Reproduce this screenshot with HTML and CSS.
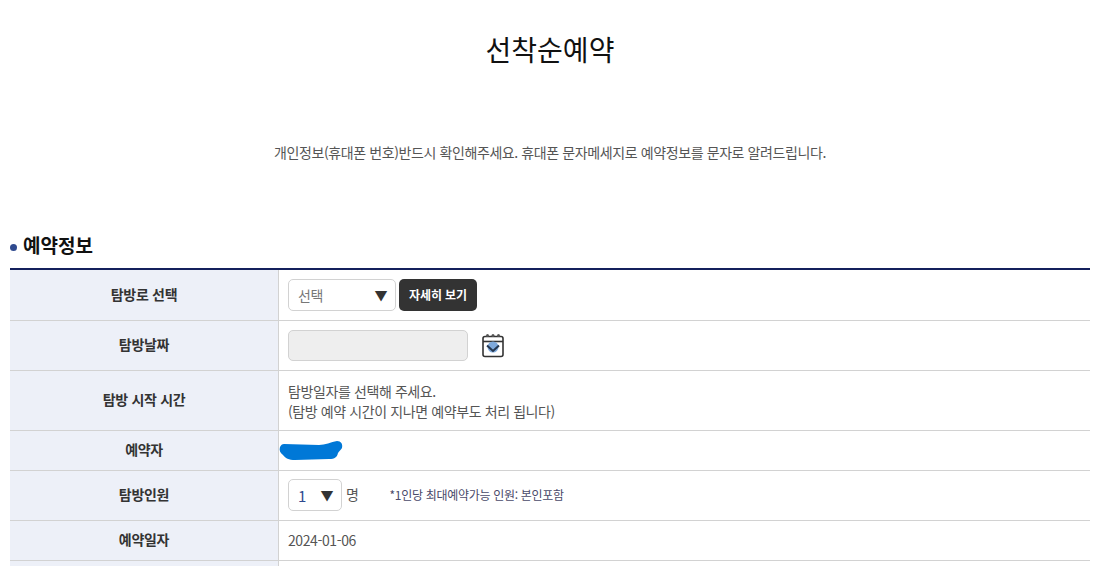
FILE: index.html
```html
<!DOCTYPE html>
<html lang="ko">

<head>
    <meta charset="UTF-8">
    <meta name="viewport" content="width=device-width, initial-scale=1.0">
    <title>선착순예약</title>
    <link rel="stylesheet" href="styles.css">
</head>

<body class="body">
    <div class="wrap">
        <h1 class="page-title">선착순예약</h1>
        <p class="notice">개인정보(휴대폰 번호)반드시 확인해주세요. 휴대폰 문자메세지로 예약정보를 문자로 알려드립니다.</p>

        <h2 class="section-title"><span class="dot"></span>예약정보</h2>

        <table class="form-table">
            <tr class="row-first">
                <th>탐방로 선택</th>
                <td>
                    <div class="field-line">
                        <div class="select-box course-select">
                            <select class="select">
                                <option>선택</option>
                            </select>
                        </div>
                        <button class="btn-detail" type="button">자세히 보기</button>
                    </div>
                </td>
            </tr>
            <tr class="row-50">
                <th>탐방날짜</th>
                <td>
                    <div class="field-line date-line">
                        <input class="date-input" type="text" disabled>
                        <svg class="cal-icon" width="24" height="26" viewBox="0 0 24 26">
                            <rect x="2" y="4.5" width="20" height="20" rx="2" fill="#fff" stroke="#333" stroke-width="1.6" />
                            <path d="M2 9.5H22" stroke="#333" stroke-width="1.6" />
                            <circle cx="6.5" cy="3.5" r="1.5" fill="#555" />
                            <circle cx="12" cy="3.5" r="1.5" fill="#555" />
                            <circle cx="17.5" cy="3.5" r="1.5" fill="#555" />
                            <circle cx="12" cy="15" r="5.5" fill="#7ea9dc" />
                            <path d="M6 13.5L12 19L18 13.5" fill="none" stroke="#24364f" stroke-width="2" />
                        </svg>
                    </div>
                </td>
            </tr>
            <tr class="row-60">
                <th>탐방 시작 시간</th>
                <td class="multi">탐방일자를 선택해 주세요.<br>(탐방 예약 시간이 지나면 예약부도 처리 됩니다)</td>
            </tr>
            <tr class="row-40">
                <th>예약자</th>
                <td class="name-cell">
                    <svg class="blot" width="64" height="20" viewBox="0 0 64 20">
                        <path d="M5 3L40 4C46 4 52 1 58 0C62 0 64 3 63 7C62 9 60 10 59 12C58 16 56 18 50 18L16 19C10 19 6 17 4 14C1 12 0 9 1 6C2 4 3 3 5 3Z" fill="#0078d7" />
                    </svg>
                </td>
            </tr>
            <tr class="row-50">
                <th>탐방인원</th>
                <td>
                    <div class="field-line">
                        <div class="select-box count-select">
                            <select class="select count">
                                <option>1</option>
                            </select>
                        </div>
                        <span class="unit">명</span>
                        <span class="hint">*1인당 최대예약가능 인원: 본인포함</span>
                    </div>
                </td>
            </tr>
            <tr class="row-40">
                <th>예약일자</th>
                <td>2024-01-06</td>
            </tr>
            <tr class="row-end">
                <th></th>
                <td></td>
            </tr>
        </table>
    </div>
</body>

</html>
```

FILE: styles.css
```css
html,
body {
    margin: 0;
    height: 566px;
    overflow: hidden;
    background: #fff;
}

body {
    font-family: "Noto Sans CJK KR", "Noto Sans", sans-serif;
    font-size: 14px;
    color: #444;
}

.wrap {
    width: 1080px;
    margin-left: 10px;
}

.page-title {
    margin: 0;
    padding-top: 28px;
    font-size: 28px;
    line-height: 42px;
    font-weight: 400;
    color: #111;
    text-align: center;
}

.notice {
    margin: 0;
    padding-top: 72px;
    font-size: 14px;
    line-height: 20px;
    letter-spacing: -0.4px;
    color: #555;
    text-align: center;
}

.section-title {
    display: flex;
    align-items: center;
    margin: 0;
    padding-top: 67px;
    height: 32px;
    font-size: 19px;
    line-height: 32px;
    font-weight: 700;
    color: #111;
}

.dot {
    width: 7px;
    height: 7px;
    margin-right: 6px;
    margin-top: 5px;
    border-radius: 50%;
    background: #2f4a8f;
}

.form-table {
    width: 1080px;
    margin-top: 7px;
    border-collapse: collapse;
    table-layout: fixed;
    border-top: 2px solid #14205c;
}

.form-table th,
.form-table td {
    padding: 0;
    border-bottom: 1px solid #d2d2d2;
    font-size: 14px;
}

.form-table th {
    width: 268px;
    padding-bottom: 2px;
    background: #edf0f8;
    border-right: 1px solid #d2d2d2;
    font-weight: 700;
    letter-spacing: -0.3px;
    color: #333;
    text-align: center;
}

.form-table td {
    padding-left: 9px;
    letter-spacing: -0.4px;
    color: #555;
}

.row-first {
    height: 51px;
}

.row-40 {
    height: 40px;
}

.row-50 {
    height: 50px;
}

.row-60 {
    height: 60px;
}

.row-end {
    height: 6px;
}

.form-table .row-end th,
.form-table .row-end td {
    padding-bottom: 0;
    border-bottom: 0;
}

.form-table .multi {
    padding-top: 2px;
    line-height: 20px;
}

.field-line {
    display: flex;
    align-items: center;
}

.select-box {
    position: relative;
    height: 32px;
}

.select-box::after {
    content: "▼";
    position: absolute;
    right: 9px;
    top: 7px;
    font-size: 13px;
    line-height: 18px;
    color: #333;
    pointer-events: none;
}

.course-select {
    width: 108px;
}

.count-select {
    width: 54px;
}

.select {
    appearance: none;
    width: 100%;
    height: 32px;
    padding: 0 0 0 9px;
    border: 1px solid #d2d2d2;
    border-radius: 5px;
    background: #fff;
    font-family: inherit;
    font-size: 14px;
    letter-spacing: -0.4px;
    color: #777;
}

.select.count {
    color: #2f4a8f;
    font-size: 15px;
}

.btn-detail {
    width: 78px;
    height: 32px;
    margin-left: 3px;
    padding: 0;
    border: 0;
    border-radius: 5px;
    background: #333;
    font-family: inherit;
    font-size: 12px;
    font-weight: 700;
    letter-spacing: -0.1px;
    color: #fff;
}

.date-input {
    width: 180px;
    height: 31px;
    box-sizing: border-box;
    border: 1px solid #d2d2d2;
    border-radius: 5px;
    background: #eee;
}

.cal-icon {
    margin-left: 13px;
}

.blot {
    display: block;
    margin-left: -9px;
    margin-top: 1px;
}

.unit {
    margin-left: 4px;
    margin-bottom: 2px;
}

.hint {
    margin-left: 31px;
    margin-bottom: 2px;
    font-size: 12px;
    letter-spacing: -0.3px;
    color: #4a4a6a;
}
```
